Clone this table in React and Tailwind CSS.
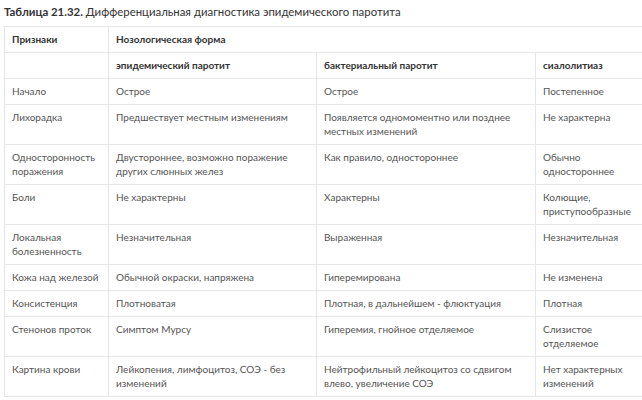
const rows = [
  ["Начало", "Острое", "Острое", "Постепенное"],
  ["Лихорадка", "Предшествует местным изменениям", "Появляется одномоментно или позднее местных изменений", "Не характерна"],
  ["Односторонность поражения", "Двустороннее, возможно поражение других слюнных желез", "Как правило, одностороннее", "Обычно одностороннее"],
  ["Боли", "Не характерны", "Характерны", "Колющие, приступообразные"],
  ["Локальная болезненность", "Незначительная", "Выраженная", "Незначительная"],
  ["Кожа над железой", "Обычной окраски, напряжена", "Гиперемирована", "Не изменена"],
  ["Консистенция", "Плотноватая", "Плотная, в дальнейшем - флюктуация", "Плотная"],
  ["Стенонов проток", "Симптом Мурсу", "Гиперемия, гнойное отделяемое", "Слизистое отделяемое"],
  ["Картина крови", "Лейкопения, лимфоцитоз, СОЭ - без изменений", "Нейтрофильный лейкоцитоз со сдвигом влево, увеличение СОЭ", "Нет характерных изменений"],
];

const cell = "border border-[#e6e6e6] px-[7px] pt-[5px] pb-[6px] align-top text-left";

export default function App() {
  return (
    <div className="w-[642px] h-[400px] overflow-hidden bg-white font-['Lato','Liberation_Sans',sans-serif]">
      <div className="pl-1 pt-[4px] h-[26px] text-[11.4px] leading-[15px] text-[#333]">
        <span className="font-bold">Таблица 21.32.</span> Дифференциальная диагностика эпидемического паротита
      </div>
      <table className="ml-1 w-[642px] table-fixed border-collapse text-[10px] leading-[14px] text-[#555]">
        <colgroup>
          <col className="w-[104px]" />
          <col className="w-[208px]" />
          <col className="w-[219px]" />
          <col className="w-[111px]" />
        </colgroup>
        <thead>
          <tr className="h-[25px]">
            <th className={cell + " font-bold text-[#333]"}>Признаки</th>
            <th colSpan={3} className={cell + " font-bold text-[#333]"}>Нозологическая форма</th>
          </tr>
          <tr className="h-[26px]">
            <th className={cell}></th>
            <th className={cell + " font-bold text-[#333]"}>эпидемический паротит</th>
            <th className={cell + " font-bold text-[#333]"}>бактериальный паротит</th>
            <th className={cell + " font-bold text-[#333]"}>сиалолитиаз</th>
          </tr>
        </thead>
        <tbody>
          {rows.map((r) => (
            <tr key={r[0]}>
              {r.map((c, i) => (
                <td key={i} className={cell}>{c}</td>
              ))}
            </tr>
          ))}
        </tbody>
      </table>
    </div>
  );
}
